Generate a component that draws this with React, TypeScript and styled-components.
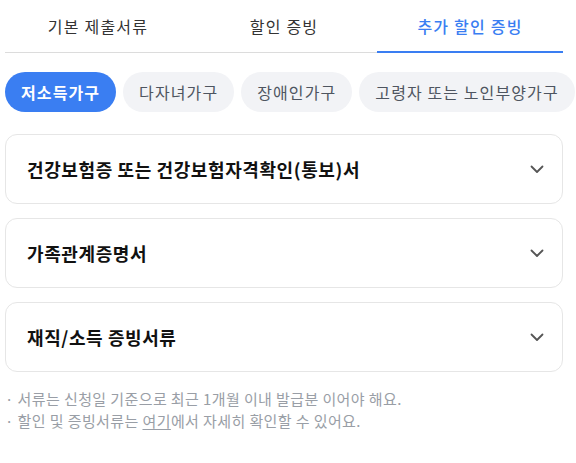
import React, { useState } from "react";
import styled, { createGlobalStyle } from "styled-components";

const Global = createGlobalStyle`
  body {
    margin: 0;
    background: #ffffff;
    font-family: "Noto Sans CJK KR", "Noto Sans", sans-serif;
  }
`;

const Page = styled.div`
  width: 558px;
  margin-left: 5px;
  display: flex;
  flex-direction: column;
`;

const TabBar = styled.div`
  display: grid;
  grid-template-columns: repeat(3, 1fr);
  border-bottom: 1px solid #dcdcdc;
  height: 53px;
  box-sizing: border-box;
`;

const Tab = styled.div<{ $active?: boolean }>`
  display: flex;
  align-items: center;
  justify-content: center;
  font-size: 16px;
  letter-spacing: 1.2px;
  color: ${(p) => (p.$active ? "#3a7ef2" : "#333333")};
  font-weight: ${(p) => (p.$active ? 500 : 400)};
  position: relative;
  &::after {
    content: "";
    position: absolute;
    left: 0;
    right: 0;
    bottom: -1px;
    height: 2px;
    background: ${(p) => (p.$active ? "#3a7ef2" : "transparent")};
  }
`;

const ChipRow = styled.div`
  display: flex;
  gap: 7px;
  margin-top: 19px;
  width: 576px;
  overflow: hidden;
`;

const Chip = styled.div<{ $active?: boolean }>`
  flex: none;
  height: 40px;
  padding: 0 16px;
  border-radius: 20px;
  display: flex;
  align-items: center;
  font-size: 16px;
  letter-spacing: 1.1px;
  white-space: nowrap;
  background: ${(p) => (p.$active ? "#3a7ef2" : "#f2f3f6")};
  color: ${(p) => (p.$active ? "#ffffff" : "#4e5560")};
  font-weight: ${(p) => (p.$active ? 700 : 400)};
`;

const CardList = styled.div`
  display: flex;
  flex-direction: column;
  gap: 14px;
  margin-top: 22px;
`;

const Card = styled.div`
  height: 70px;
  box-sizing: border-box;
  border: 1px solid #e6e6e6;
  border-radius: 12px;
  display: flex;
  align-items: center;
  justify-content: space-between;
  padding: 0 17px 0 21px;
`;

const CardTitle = styled.div`
  font-size: 18px;
  font-weight: 700;
  letter-spacing: 0.6px;
  color: #111111;
`;

const Chevron = () => (
  <svg width="16" height="16" viewBox="0 0 16 16" fill="none">
    <path d="M2.5 5.5 L8 11 L13.5 5.5" stroke="#555" strokeWidth="1.8" strokeLinecap="round" strokeLinejoin="round" />
  </svg>
);

const Notes = styled.div`
  margin-top: 17px;
  display: flex;
  flex-direction: column;
  gap: 2px;
`;

const Note = styled.div`
  font-size: 15px;
  letter-spacing: 0.4px;
  color: #999ea6;
  line-height: 20px;
`;

const Link = styled.span`
  text-decoration: underline;
  text-underline-offset: 2px;
`;

export default function App() {
  const [tab] = useState(2);
  const tabs = ["기본 제출서류", "할인 증빙", "추가 할인 증빙"];
  const chips = ["저소득가구", "다자녀가구", "장애인가구", "고령자 또는 노인부양가구"];
  const cards = ["건강보험증 또는 건강보험자격확인(통보)서", "가족관계증명서", "재직/소득 증빙서류"];
  return (
    <>
      <Global />
      <Page>
        <TabBar>
          {tabs.map((t, i) => (
            <Tab key={t} $active={i === tab}>{t}</Tab>
          ))}
        </TabBar>
        <ChipRow>
          {chips.map((c, i) => (
            <Chip key={c} $active={i === 0}>{c}</Chip>
          ))}
        </ChipRow>
        <CardList>
          {cards.map((c) => (
            <Card key={c}>
              <CardTitle>{c}</CardTitle>
              <Chevron />
            </Card>
          ))}
        </CardList>
        <Notes>
          <Note>· 서류는 신청일 기준으로 최근 1개월 이내 발급분 이어야 해요.</Note>
          <Note>· 할인 및 증빙서류는 <Link>여기</Link>에서 자세히 확인할 수 있어요.</Note>
        </Notes>
      </Page>
    </>
  );
}
